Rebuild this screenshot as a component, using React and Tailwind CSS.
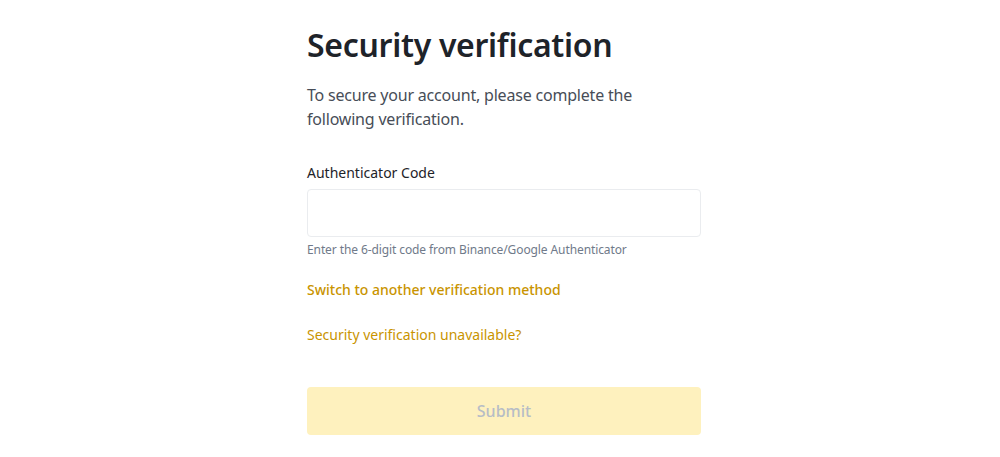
export default function App() {
  return (
    <div className="w-[1000px] h-[457px] bg-white flex justify-center" style={{ fontFamily: '"Noto Sans", "Open Sans", Arial, sans-serif' }}>
      <div className="w-[394px] ml-[8px] pt-[23px] flex flex-col">
        <h1 className="text-[32px] leading-[44px] font-semibold text-[#1E2329] tracking-[-0.3px]">Security verification</h1>
        <p className="mt-[16px] text-[16px] leading-[24px] text-[#474D57] tracking-[-0.2px]">To secure your account, please complete the following verification.</p>
        <label className="mt-[32px] text-[14px] leading-[20px] text-[#1E2329]">Authenticator Code</label>
        <div className="mt-[6px] h-[48px] rounded-[4px] border border-[#EAECEF]"></div>
        <p className="mt-[5px] text-[12px] leading-[16px] text-[#707A8A] tracking-[-0.1px]">Enter the 6-digit code from Binance/Google Authenticator</p>
        <a className="mt-[22px] text-[14px] leading-[20px] font-medium text-[#C99400]">Switch to another verification method</a>
        <a className="mt-[25px] text-[14px] leading-[20px] text-[#C99400]">Security verification unavailable?</a>
        <button className="mt-[42px] h-[48px] rounded-[4px] bg-[#FEF1BE] text-[16px] font-medium text-[#B7BDC6]">Submit</button>
      </div>
    </div>
  );
}
